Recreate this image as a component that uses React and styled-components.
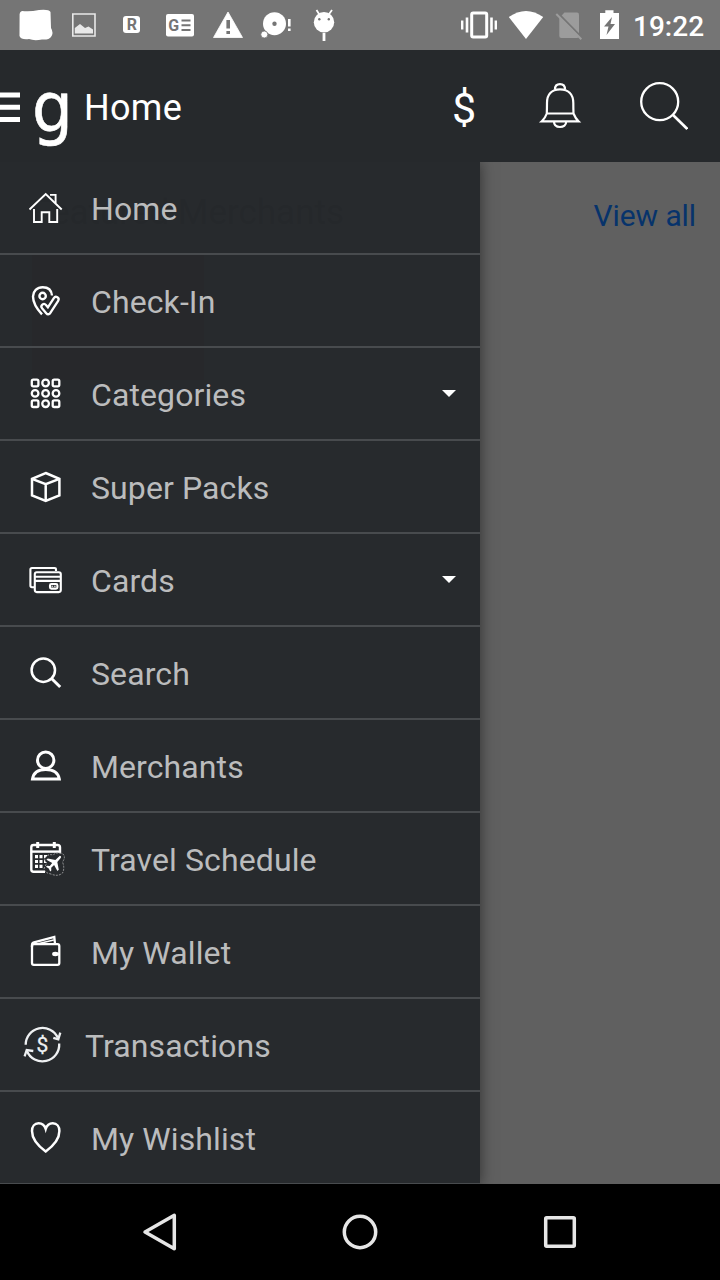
import styled, { createGlobalStyle } from "styled-components";

const drawerColor = "#272a2d";

const GlobalStyle = createGlobalStyle`
    *{
        box-sizing: border-box;
    }

    body{
        margin: 0;
        background: black;
        font-family: Roboto, "Liberation Sans", sans-serif;
    }
`;

// Menu icons, all drawn on a 48x48 grid
const icons = {
    home: (
        <g strokeWidth="1.9">
            <path d="M9.5 25.5 25.7 10 41.7 25.5" />
            <path d="M30 10.9H35.6V19" />
            <path d="M14 25V38H21.7V28.3H29.3V38H37.2V25" />
        </g>
    ),
    checkin: (
        <g strokeWidth="2.4">
            <path d="M32 18.5C31.5 13 28 10.2 22.7 10.2C17 10.2 13 14.5 13 19.5C13 25.5 17 32 22 37.4" />
            <circle cx="22.6" cy="19" r="3.2" />
            <g strokeLinecap="round" strokeLinejoin="round">
                <path d="M24 29.6 28.2 34.6 36 22.4" strokeWidth="7.4" />
                <path d="M24 29.6 28.2 34.6 36 22.4" strokeWidth="2.8" stroke={drawerColor} />
            </g>
        </g>
    ),
    categories: (
        <g strokeWidth="2.3">
            {[13, 23.4, 33.7].map((y, row) =>
                [15.1, 25.6, 36].map((x, col) => (
                    <rect
                        key={`${row}-${col}`}
                        x={x - 3.3}
                        y={y - 3.3}
                        width="6.6"
                        height="6.6"
                        rx={row !== 1 && col !== 1 ? 1.5 : 3.2}
                    />
                ))
            )}
        </g>
    ),
    packs: (
        <g strokeWidth="2.5">
            <path d="M25.7 10 39.4 15.8V32.3L25.7 38L12 32.3V15.8Z" />
            <path d="M12 15.8 25.7 21.2 39.4 15.8M25.7 21.2V38" />
        </g>
    ),
    cards: (
        <g strokeWidth="2.1">
            <path d="M36 15V13.4Q36 12 34.5 12H12Q10.4 12 10.4 13.6V29.6Q10.4 31.3 12 31.3H14.6" />
            <rect x="14.8" y="16.3" width="26" height="19.8" rx="2" />
            <path d="M15 20.7H41M15 24.9H41" />
            <rect x="30" y="28" width="7.4" height="4.6" rx="1.4" />
            <path d="M31.5 30.3H36" strokeWidth="1.1" strokeDasharray="1.6 1" />
        </g>
    ),
    search: (
        <g strokeWidth="2.5">
            <circle cx="23.3" cy="21.2" r="11.7" />
            <path d="M31.8 29.8 40.2 38" strokeWidth="3" />
        </g>
    ),
    merchants: (
        <g strokeWidth="3">
            <circle cx="25.7" cy="18.2" r="8.2" />
            <path d="M12.5 37C13.4 31 18 27.4 25.7 27.4S38.4 31 39.3 37Z" />
        </g>
    ),
    travel: (
        <g strokeWidth="2.4">
            <path d="M40 20V12.2Q40 10 37.7 10H13.6Q11.3 10 11.3 12.2V34.6Q11.3 36.8 13.6 36.8H25" />
            <path d="M11 16.6H40" />
            <path d="M17.7 7V13M34.3 7V13" strokeWidth="3" />
            <path d="M16.500 20V33M21 20V33M25.500 20V28M30 20V23" strokeWidth="3" strokeDasharray="3.200 1.700" />
            <path
                d="M25 23Q28 18.5 33 20Q37 16.5 43 19Q46 22 42.5 27Q45 33 42.5 38Q38 42 31 39Q25 38 24 34Q25 31 27 28Q24 26 25 23Z"
                fill={drawerColor}
                stroke="#a5a6a7"
                strokeWidth=".9"
                strokeDasharray="2 1.2"
            />
            <path
                d="M39.8 20.8Q41.6 21 40.9 22.7L37.3 27L38.8 34.8L37.4 36L34.1 30L31.2 32.8L31.3 35.6L30.2 36.4L28.8 33.4L26 31.8L27 30.7L29.8 30.9L32.2 28.1L26.4 24.8L27.8 23.4L35.4 24.9Z"
                fill="white"
                stroke="none"
            />
        </g>
    ),
    wallet: (
        <g strokeWidth="2.3">
            <rect x="12" y="16.2" width="27.3" height="20.6" rx="1.8" />
            <path d="M12 19V17Q12 15 14 14.4L34.3 9L35 15.8" />
            <path d="M18 15.7 33.8 12" strokeWidth="1.4" />
            <ellipse cx="35.3" cy="26" rx="3.2" ry="2.2" fill="white" stroke="none" />
            <path d="M35 26H39" />
        </g>
    ),
    transactions: (
        <g strokeWidth="2.3" stroke="#eef0f2">
            <path d="M5.7 23.8A16.8 16.8 0 0 1 37.8 16.8" />
            <path d="M33.3 16.8 38.3 18.4 40.3 11.6" />
            <path d="M39.2 22.5A16.8 16.8 0 0 1 6.9 30" />
            <path d="M4.6 35.3 6.7 29 13.3 30" />
            <text x="22.4" y="31" fontSize="21" textAnchor="middle" fill="#eef0f2" strokeWidth=".3">$</text>
        </g>
    ),
    wishlist: (
        <path
            strokeWidth="2.5"
            d="M25.7 15C24.5 11 21.8 9.3 18.6 9.3C14.5 9.3 12 12.5 12 17C12 25.5 17.5 31.5 25.7 37.4C33.9 31.5 39.4 25.5 39.4 17C39.4 12.5 36.9 9.3 32.8 9.3C29.6 9.3 26.9 11 25.7 15Z"
        />
    ),
};

const menu = [
    { icon: "home", title: "Home" },
    { icon: "checkin", title: "Check-In" },
    { icon: "categories", title: "Categories", expandable: true },
    { icon: "packs", title: "Super Packs" },
    { icon: "cards", title: "Cards", expandable: true },
    { icon: "search", title: "Search" },
    { icon: "merchants", title: "Merchants" },
    { icon: "travel", title: "Travel Schedule" },
    { icon: "wallet", title: "My Wallet" },
    { icon: "transactions", title: "Transactions", shift: -6 },
    { icon: "wishlist", title: "My Wishlist" },
];

const StatusBar = () => (
    <StyledStatus>
        <StyledNotifications>
            <svg width="48" height="50" fill="white">
                <path d="M10 11Q18 12 27 10Q37 9 38.5 12L39 28Q42 33 39 37Q37 40 30 39.5Q22 41 17 39Q9 40 7.5 36L7.6 14Q8 11.5 10 11Z" />
            </svg>
            <svg width="48" height="50" fill="#e8e8e8">
                <path d="M12.8 14H35V36H12.8Z" fill="none" stroke="#e8e8e8" strokeWidth="1.6" />
                <path d="M14.8 33.5V28L20 24L25 28L28.5 26.5L33 29.5V33.5Z" />
            </svg>
            <svg width="48" height="50">
                <rect x="15" y="16" width="17" height="17" rx="3" fill="white" />
                <StyledBadgeText x="23.8" y="30.3" $size="16">R</StyledBadgeText>
            </svg>
            <svg width="48" height="50">
                <rect x="10" y="14" width="28" height="22.5" rx="2" fill="white" />
                <StyledBadgeText x="17.8" y="30.5" $size="16">G</StyledBadgeText>
                <path d="M25.5 20.5H34.5M25.5 25.2H34.5M25.5 30H34.5" stroke="#757575" strokeWidth="2" />
            </svg>
            <svg width="48" height="50">
                <path d="M24 12 38.5 37.5H9.5Z" fill="white" stroke="white" strokeWidth=".8" strokeLinejoin="round" />
                <path d="M24.2 20V28.5M24.2 31V34" stroke="#757575" strokeWidth="3.6" />
            </svg>
            <svg width="48" height="50">
                <circle cx="22.5" cy="23.7" r="11.5" fill="white" />
                <circle cx="22.5" cy="23.7" r="2.2" fill="#757575" />
                <circle cx="12.3" cy="34.5" r="3.5" fill="white" stroke="#757575" strokeWidth=".8" />
                <path d="M37.3 19V26.5M37.3 28.5V31" stroke="white" strokeWidth="2.6" />
            </svg>
            <svg width="48" height="50">
                <path d="M16.5 10 20 15.5M32 10 28 15.5" stroke="white" strokeWidth="1.8" />
                <circle cx="24" cy="22.2" r="10.2" fill="white" />
                <circle cx="19.3" cy="19.3" r="1.2" fill="#757575" />
                <circle cx="28.8" cy="19.3" r="1.2" fill="#757575" />
                <path d="M24 33V41" stroke="white" strokeWidth="2.8" />
            </svg>
        </StyledNotifications>
        <StyledSystem>
            {/* vibrate */}
            <svg width="40" height="50" fill="none" stroke="white">
                <rect x="11.7" y="13" width="15" height="24" rx="1.5" strokeWidth="3" />
                <path d="M7 17.5V32.5M31.5 17.5V32.5" strokeWidth="2.6" />
                <path d="M2.2 20.5V29.5M35.8 20.5V29.5" strokeWidth="2.4" />
            </svg>
            {/* wifi */}
            <svg width="44" height="50" fill="white">
                <path d="M8.8 17Q26 5 43.2 17L26 39Z" />
            </svg>
            {/* no sim */}
            <svg width="40" height="50">
                <path d="M15.3 18 20.5 12.5H33Q35 12.5 35 14.5V36Q35 38 33 38H17.3Q15.3 38 15.3 36Z" fill="#9c9c9c" />
                <path d="M13.8 13 38.8 38.5" stroke="#757575" strokeWidth="2" />
                <path d="M12.3 14 37.3 39.3" stroke="#9c9c9c" strokeWidth="2" />
            </svg>
            {/* battery */}
            <svg width="49" height="50">
                <path d="M16 13H21.3V10.3H29.5V13H35V39H16Z" fill="white" />
                <path d="M28 17 20 26.5H24.5L22.5 35L31 24H26.5Z" fill="#757575" />
            </svg>
            <StyledClock>19:22</StyledClock>
        </StyledSystem>
    </StyledStatus>
);

const Header = () => (
    <StyledHeader>
        <svg width="20" height="112" fill="white">
            <path d="M0 42.5H20V47.5H0ZM0 54.7H20V59.7H0ZM0 67H20V72H0Z" />
        </svg>
        <StyledLogo>g</StyledLogo>
        <StyledTitle>Home</StyledTitle>
        <StyledActions>
            <StyledDollar>$</StyledDollar>
            <svg width="48" height="112" fill="none" stroke="white" strokeWidth="2.2">
                <path d="M10.8 63.5Q11 58 11 53C11 44 16 39.3 24 39.3S37.3 44 37.3 53Q37.3 58 37.5 63.5Q39.5 68.5 42.5 71.3H5.8Q9 68.5 10.8 63.5ZM11 63.5H37.5" />
                <path d="M19 39.5C19 36 21 34.2 24 34.2S29 36 29 39.5" />
                <path d="M18 71.5C18 75 20.5 77 24 77S30.2 75 30.2 71.5" />
            </svg>
            <svg width="56" height="112" fill="none" stroke="white">
                <circle cx="27.7" cy="51.7" r="18.5" strokeWidth="2.3" />
                <path d="M40.5 64.5 55.3 79" strokeWidth="2.6" />
            </svg>
        </StyledActions>
    </StyledHeader>
);

const MenuRow = ({ item }) => (
    <StyledRow>
        <StyledIcon viewBox="0 0 48 48">{icons[item.icon]}</StyledIcon>
        <StyledLabel $shift={item.shift}>{item.title}</StyledLabel>
        {item.expandable && (
            <StyledCaret viewBox="0 0 14 7">
                <path d="M0 0H14L7 7Z" />
            </StyledCaret>
        )}
    </StyledRow>
);

const App = () => {
    return (
        <StyledScreen>
            <GlobalStyle />
            <StatusBar />
            <Header />
            <StyledContent>
                <StyledSection>
                    <h2>Featured Merchants</h2>
                    <a>View all</a>
                </StyledSection>
                <StyledMerchantCard />
                <StyledDrawer>
                    {menu.map((item) => (
                        <MenuRow item={item} key={item.title} />
                    ))}
                </StyledDrawer>
            </StyledContent>
            <StyledNavBar>
                <svg width="48" height="48">
                    <path d="M9 24 38.3 7.3V40.7Z" />
                </svg>
                <svg width="48" height="48">
                    <circle cx="24" cy="24" r="15.7" />
                </svg>
                <svg width="48" height="48">
                    <rect x="9.7" y="9.7" width="28.6" height="28.6" rx="1" />
                </svg>
            </StyledNavBar>
        </StyledScreen>
    );
};

const StyledScreen = styled.div`
    width: 720px;
    height: 1280px;
    display: flex;
    flex-direction: column;
    overflow: hidden;

    svg{
        display: block;
        flex-shrink: 0;
    }
`;

const StyledStatus = styled.div`
    height: 50px;
    display: flex;
    justify-content: space-between;
    background: #757575;
    color: white;
`;

const StyledNotifications = styled.div`
    display: flex;
    padding-left: 12px;
`;

const StyledSystem = styled.div`
    display: flex;
    align-items: center;
    width: 260px;
`;

const StyledBadgeText = styled.text`
    font-size: ${(props) => props.$size}px;
    font-weight: 700;
    text-anchor: middle;
    fill: #757575;
`;

const StyledClock = styled.span`
    font-size: 28px;
    font-weight: 500;
    line-height: 50px;
    padding-top: 3px;
`;

const StyledHeader = styled.header`
    height: 112px;
    display: flex;
    align-items: center;
    background: #26292c;
    color: white;
`;

const StyledLogo = styled.span`
    width: 62px;
    padding: 4px 0 0 12px;
    font-family: "DejaVu Sans", sans-serif;
    font-size: 70px;
    line-height: 108px;
    transform: scaleX(.92);
    transform-origin: 12px 50%;
    -webkit-text-stroke: .6px white;
`;

const StyledTitle = styled.h1`
    margin: 0;
    flex: 1;
    font-size: 36px;
    font-weight: 400;
    line-height: 110px;
    padding: 4px 0 0 2px;
    letter-spacing: .3px;
`;

const StyledActions = styled.div`
    display: flex;
    gap: 48px;
    padding-right: 32px;
`;

const StyledDollar = styled.span`
    width: 48px;
    padding-top: 5px;
    font-size: 43px;
    line-height: 107px;
    text-align: center;
`;

const StyledContent = styled.main`
    position: relative;
    flex: 1;
    overflow: hidden;
    background: #606060;
`;

const StyledSection = styled.div`
    height: 92px;
    padding: 15px 24px 0 32px;
    display: flex;
    justify-content: space-between;

    h2{
        margin: 0;
        font-size: 35px;
        font-weight: 400;
        line-height: 72px;
        color: black;
    }

    a{
        font-size: 30px;
        line-height: 78px;
        color: #07336b;
        letter-spacing: -.1px;
    }
`;

const StyledMerchantCard = styled.div`
    width: 172px;
    height: 126px;
    margin-left: 32px;
    background: #5c2424;
`;

const StyledDrawer = styled.nav`
    position: absolute;
    top: 0;
    left: 0;
    width: 480px;
    background: rgba(38, 41, 44, .975);
    box-shadow: 0 0 14px rgba(0,0,0,.5);
`;

const StyledRow = styled.div`
    height: 93px;
    display: flex;
    align-items: center;
    padding: 0 24px 0 20px;
    border-bottom: 2px solid #484b4e;
`;

const StyledIcon = styled.svg`
    width: 48px;
    height: 48px;
    position: relative;
    top: .5px;
    fill: none;
    stroke: white;
`;

const StyledCaret = styled.svg`
    width: 14px;
    height: 7px;
    fill: white;
`;

const StyledLabel = styled.span`
    flex: 1;
    margin-left: ${(props) => 23 + (props.$shift || 0)}px;
    padding-top: 3px;
    font-size: 32px;
    line-height: 40px;
    letter-spacing: .1px;
    color: #bbbcbd;
`;

const StyledNavBar = styled.footer`
    height: 96px;
    display: flex;
    align-items: center;
    justify-content: space-between;
    padding: 0 136px;
    background: black;

    svg{
        fill: none;
        stroke: #e6e6e6;
        stroke-width: 3.5;
        stroke-linejoin: round;
    }
`;

export default App;
